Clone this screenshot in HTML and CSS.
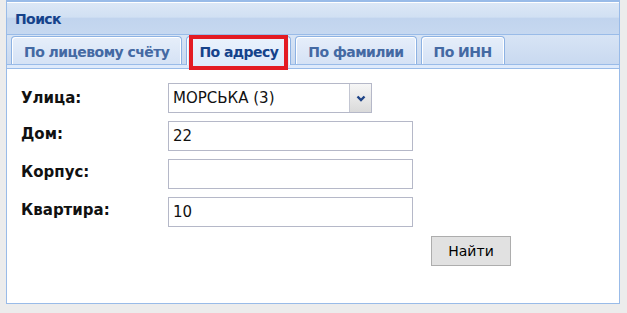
FILE: index.html
```html
<!DOCTYPE html>
<html lang="ru">
<head>
    <meta charset="UTF-8">
    <title>Поиск</title>
    <link rel="stylesheet" href="styles.css">
</head>
<body>

<!-- Панель поиска -->
<div class="panel">
    <div class="panel-header">Поиск</div>

    <!-- Вкладки -->
    <div class="tab-strip">
        <div class="tab">По лицевому счёту</div>
        <div class="tab active">По адресу<span class="mark"></span></div>
        <div class="tab">По фамилии</div>
        <div class="tab">По ИНН</div>
    </div>
    <div class="tab-spacer"></div>

    <div class="panel-body">
        <form class="search-form" onsubmit="return false;">
            <div class="form-row combo-row">
                <label>Улица:</label>
                <div class="combo">
                    <span class="combo-text">МОРСЬКА (3)</span>
                    <span class="combo-trigger">
                        <svg width="10" height="7" viewBox="0 0 10 7">
                            <polyline points="1.5,1.5 5,5 8.5,1.5" fill="none" stroke="#1f4487" stroke-width="2.4"/>
                        </svg>
                    </span>
                </div>
            </div>
            <div class="form-row">
                <label>Дом:</label>
                <input class="field" type="text" value="22">
            </div>
            <div class="form-row">
                <label>Корпус:</label>
                <input class="field" type="text" value="">
            </div>
            <div class="form-row">
                <label>Квартира:</label>
                <input class="field" type="text" value="10">
            </div>
            <div class="button-row">
                <button class="find-button" type="submit">Найти</button>
            </div>
        </form>
    </div>
</div>

</body>
</html>
```

FILE: styles.css
```css
/* Общие стили */
body {
    margin: 0;
    background-color: #ececec;
    font-family: "DejaVu Sans", sans-serif;
}

/* Панель */
.panel {
    margin-left: 6px;
    width: 614px;
    box-sizing: border-box;
    border: 1px solid #99bbe8;
    border-top-width: 2px;
    background-color: #ffffff;
}

.panel-header {
    height: 31px;
    border-top: 1px solid #ffffff;
    border-bottom: 1px solid #99bbe8;
    background: linear-gradient(#dce7f6, #d1e0f3 45%, #c1d4ee 50%, #c6d8f0);
    padding-left: 8px;
    display: flex;
    align-items: center;
    font-size: 14px;
    font-weight: bold;
    letter-spacing: -0.6px;
    color: #15428b;
}

/* Вкладки */
.tab-strip {
    height: 29px;
    padding-left: 4px;
    display: flex;
    align-items: flex-end;
    gap: 4px;
    background: linear-gradient(#d7e4f5, #c9d9f0);
}

.tab {
    position: relative;
    height: 25px;
    padding: 2px 12px 0;
    display: flex;
    align-items: center;
    border: 1px solid #8db2e3;
    border-bottom: none;
    border-radius: 4px 4px 0 0;
    box-shadow: inset 1px 1px 0 #ffffff, inset -1px 0 0 #ffffff;
    background: linear-gradient(#e6eefa, #d5e2f5);
    font-size: 14px;
    font-weight: bold;
    letter-spacing: -0.55px;
    color: #4469a3;
}

.tab.active {
    height: 26px;
    margin-bottom: -1px;
    z-index: 1;
    background: linear-gradient(#eaf2fc, #deeafb);
    color: #15428b;
}

/* Красная рамка вокруг активной вкладки */
.mark {
    position: absolute;
    left: 2px;
    top: -2px;
    width: 99px;
    height: 35px;
    box-sizing: border-box;
    border: 4px solid #e31b23;
}

.tab-spacer {
    height: 3px;
    border-top: 1px solid #99bbe8;
    border-bottom: 1px solid #99bbe8;
    background-color: #deeafb;
}

/* Форма */
.panel-body {
    height: 234px;
    padding: 14px 0 0 14px;
    box-sizing: border-box;
}

.search-form {
    width: 490px;
}

.form-row {
    display: flex;
    align-items: center;
    margin-bottom: 8px;
}

.form-row label {
    width: 147px;
    flex-shrink: 0;
    margin-top: -5px;
    font-size: 15px;
    font-weight: bold;
    color: #111111;
}

.combo-row label {
    margin-top: 0;
}

.combo {
    width: 204px;
    height: 30px;
    box-sizing: border-box;
    border: 1px solid #b5b8c8;
    display: flex;
}

.combo-text {
    flex: 1;
    padding-left: 4px;
    display: flex;
    align-items: center;
    font-size: 15px;
    color: #111111;
}

.combo-trigger {
    width: 21px;
    border-left: 1px solid #c3c6d2;
    background: linear-gradient(#f6f6f6, #dadada);
    display: flex;
    align-items: center;
    justify-content: center;
}

.field {
    width: 245px;
    height: 30px;
    box-sizing: border-box;
    margin: 0;
    border: 1px solid #b5b8c8;
    padding: 0 4px;
    font-family: "DejaVu Sans", sans-serif;
    font-size: 15px;
    color: #111111;
    outline: none;
}

.button-row {
    display: flex;
    justify-content: flex-end;
    margin-top: 9px;
}

.find-button {
    width: 80px;
    height: 30px;
    background-color: #e1e1e1;
    border: 1px solid #adadad;
    border-radius: 0;
    font-family: "DejaVu Sans", sans-serif;
    font-size: 14px;
    color: #000000;
}
```
